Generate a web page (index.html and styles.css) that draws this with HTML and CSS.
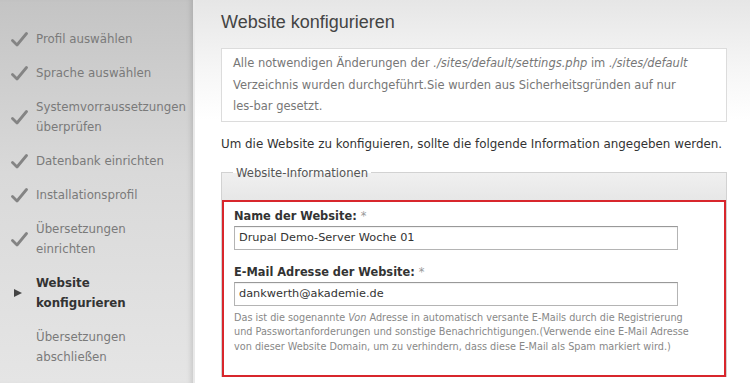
FILE: index.html
```html
<!DOCTYPE html>
<html lang="de">
<head>
    <meta charset="UTF-8">
    <meta name="viewport" content="width=device-width, initial-scale=1.0">
    <title>Website konfigurieren</title>
    <link rel="stylesheet" href="styles.css">
</head>
<body>
    <div class="page">
        <aside class="sidebar">
            <ol class="steps">
                <li class="step done">
                    <span class="step-icon"><svg width="17" height="15" viewBox="0 0 17 15"><path d="M1.5 8.5 L6 13 L15.5 1.5" /></svg></span>
                    <span class="step-label">Profil auswählen</span>
                </li>
                <li class="step done">
                    <span class="step-icon"><svg width="17" height="15" viewBox="0 0 17 15"><path d="M1.5 8.5 L6 13 L15.5 1.5" /></svg></span>
                    <span class="step-label">Sprache auswählen</span>
                </li>
                <li class="step done">
                    <span class="step-icon"><svg width="17" height="15" viewBox="0 0 17 15"><path d="M1.5 8.5 L6 13 L15.5 1.5" /></svg></span>
                    <span class="step-label">Systemvorraussetzungen überprüfen</span>
                </li>
                <li class="step done">
                    <span class="step-icon"><svg width="17" height="15" viewBox="0 0 17 15"><path d="M1.5 8.5 L6 13 L15.5 1.5" /></svg></span>
                    <span class="step-label">Datenbank einrichten</span>
                </li>
                <li class="step done">
                    <span class="step-icon"><svg width="17" height="15" viewBox="0 0 17 15"><path d="M1.5 8.5 L6 13 L15.5 1.5" /></svg></span>
                    <span class="step-label">Installationsprofil</span>
                </li>
                <li class="step done">
                    <span class="step-icon"><svg width="17" height="15" viewBox="0 0 17 15"><path d="M1.5 8.5 L6 13 L15.5 1.5" /></svg></span>
                    <span class="step-label">Übersetzungen<br>einrichten</span>
                </li>
                <li class="step active">
                    <span class="step-icon"><svg class="arrow" width="8" height="8" viewBox="0 0 8 8"><polygon points="0,0 8,4 0,8" /></svg></span>
                    <span class="step-label">Website<br>konfigurieren</span>
                </li>
                <li class="step">
                    <span class="step-icon"></span>
                    <span class="step-label">Übersetzungen<br>abschließen</span>
                </li>
            </ol>
        </aside>

        <main class="content">
            <h1>Website konfigurieren</h1>

            <div class="messages">
                Alle notwendigen Änderungen der <em>./sites/default/settings.php</em> im <em>./sites/default</em><br>
                Verzeichnis wurden durchgeführt.Sie wurden aus Sicherheitsgründen auf nur<br>
                les-bar gesetzt.
            </div>

            <p class="intro">Um die Website zu konfiguieren, sollte die folgende Information angegeben werden.</p>

            <fieldset class="site-info">
                <legend>Website-Informationen</legend>
                <div class="form-error">
                    <div class="form-item">
                        <label for="site-name">Name der Website: <span class="form-required">*</span></label>
                        <input type="text" id="site-name" value="Drupal Demo-Server Woche 01">
                    </div>
                    <div class="form-item">
                        <label for="site-mail">E-Mail Adresse der Website: <span class="form-required">*</span></label>
                        <input type="text" id="site-mail" value="dankwerth@akademie.de">
                        <div class="description">
                            Das ist die sogenannte <em>Von</em> Adresse in automatisch versante E-Mails durch die Registrierung<br>
                            und Passwortanforderungen und sonstige Benachrichtigungen.(Verwende eine E-Mail Adresse<br>
                            von dieser Website Domain, um zu verhindern, dass diese E-Mail als Spam markiert wird.)
                        </div>
                    </div>
                </div>
            </fieldset>
        </main>
    </div>
</body>
</html>
```

FILE: styles.css
```css
html, body {
    margin: 0;
    height: 100%;
    overflow: hidden;
}

body {
    font-family: "DejaVu Sans", Verdana, sans-serif;
    font-size: 11.8px;
    color: #333;
    background: #fff;
}

.page {
    display: flex;
    min-height: 100vh;
}

/* sidebar with install steps */
.sidebar {
    width: 193px;
    flex-shrink: 0;
    background: linear-gradient(to bottom, #c4c4c4 0%, #d9d9d9 45%, #e5e5e5 100%);
    box-shadow: inset -5px 0 5px -3px rgba(0, 0, 0, 0.12);
    border-right: 2px solid #e9e9e9;
}

.steps {
    list-style: none;
    margin: 0;
    padding: 22px 0 0 0;
}

.step {
    display: flex;
    align-items: center;
    padding: 7px 0;
    line-height: 20px;
    color: #7a7a7a;
}

.step-icon {
    width: 36px;
    flex-shrink: 0;
    display: flex;
    justify-content: center;
    padding-left: 2px;
    box-sizing: border-box;
}

.step-icon svg path {
    fill: none;
    stroke: #848484;
    stroke-width: 2.8;
    stroke-linecap: round;
    stroke-linejoin: round;
}

.step-icon .arrow {
    margin-left: -2px;
}

.step-icon .arrow polygon {
    fill: #444;
}

.step.active {
    color: #333;
    font-weight: bold;
}

/* main area */
.content {
    flex: 1;
    padding: 10px 23px 0 26px;
    background: linear-gradient(to bottom, #e6e6e6 0px, #f6f6f6 70px, #fff 120px);
}

h1 {
    margin: 0 0 14px 0;
    font-family: "Liberation Sans", Arial, sans-serif;
    font-weight: normal;
    font-size: 18px;
    line-height: 24px;
    color: #444;
}

.messages {
    background: #fff;
    border: 1px solid #dcdcdc;
    padding: 4px 11px 3px;
    font-size: 11.5px;
    line-height: 21.5px;
    color: #777;
}

.intro {
    margin: 12px 0 11px 0;
    font-size: 11.9px;
    line-height: 20px;
    color: #333;
}

.site-info {
    margin: 0;
    padding: 19px 0 0 0;
    border: 1px solid #d2d2d2;
    border-bottom: none;
    background: linear-gradient(to bottom, #f0f0f0, #e4e4e4 35px, #f2f2f2 60px);
}

.site-info legend {
    margin-left: 11px;
    padding: 0 3px;
    font-size: 11.6px;
    line-height: 16px;
    color: #555;
}

.form-error {
    border: 2px solid #d8262c;
    background: #fff;
    padding: 7px 10px 21px;
}

.form-item + .form-item {
    margin-top: 15px;
}

.form-item label {
    display: block;
    font-size: 11.4px;
    font-weight: bold;
    line-height: 14px;
    margin-bottom: 3px;
    color: #333;
}

.form-required {
    color: #999;
    font-weight: normal;
}

.form-item input {
    display: block;
    width: 444px;
    height: 24px;
    box-sizing: border-box;
    padding: 0 4px;
    border: 1px solid #b4b4b4;
    border-top-color: #999;
    box-shadow: inset 0 1px 1px rgba(0, 0, 0, 0.06);
    font-family: "DejaVu Sans", Verdana, sans-serif;
    font-size: 11.3px;
    color: #333;
}

.description {
    margin-top: 5px;
    font-size: 9.7px;
    line-height: 14.5px;
    color: #888;
}
```
